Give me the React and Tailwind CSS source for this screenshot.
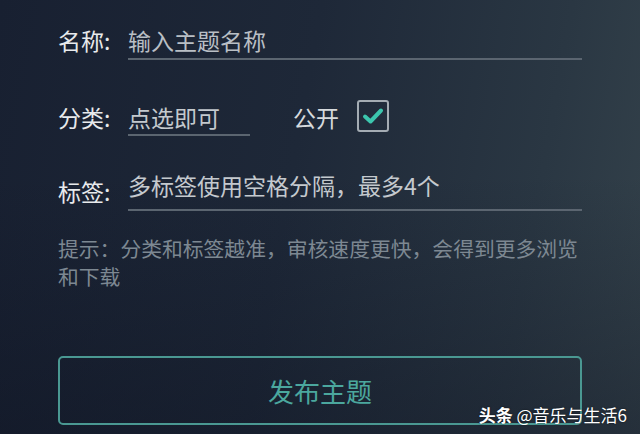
import React from 'react';

const cjk = "font-['Noto_Sans_CJK_SC','Noto_Sans',sans-serif]";

const CheckBox = () => (
    <div className="w-[32px] h-[32px] border-2 border-[#a4acb3] rounded-[3px] flex items-center justify-center">
        <svg width="22" height="18" viewBox="0 0 22 18" fill="none">
            <path d="M3 9.5 L8.5 14.5 L19 3.5" stroke="#3cc6ae" strokeWidth="4" strokeLinecap="round" strokeLinejoin="round" />
        </svg>
    </div>
);

const App = () => {
    return (
        <div className={`relative w-[640px] h-[434px] overflow-hidden ${cjk} bg-[linear-gradient(100deg,#182031_0%,#1e2838_45%,#2a3743_80%,#34424b_100%)]`}>
            {/* darker bottom */}
            <div className="absolute inset-0 bg-[linear-gradient(180deg,rgba(0,0,0,0)_40%,rgba(10,14,28,0.35)_100%)]" />

            <div className="relative flex flex-col pl-[58px] pr-[58px]">
                {/* 名称 */}
                <div className="flex items-start mt-[24px]">
                    <div className="w-[70px] text-[23px] leading-[32px] text-[#e8eaec]">名称:</div>
                    <div className="flex-1 border-b-2 border-[#5b6570] pb-[2px] text-[23px] leading-[32px] text-[#b9bfc5]">
                        输入主题名称
                    </div>
                </div>

                {/* 分类 */}
                <div className="flex items-start mt-[41px]">
                    <div className="w-[70px] text-[23px] leading-[32px] text-[#e8eaec]">分类:</div>
                    <div className="w-[122px] border-b-2 border-[#5b6570] pb-[1px] text-[23px] leading-[32px] text-[#c4c9ce]">
                        点选即可
                    </div>
                    <div className="ml-[43px] text-[23px] leading-[32px] text-[#d6dadd]">公开</div>
                    <div className="ml-[18px] -mt-[1px]">
                        <CheckBox />
                    </div>
                </div>

                {/* 标签 */}
                <div className="flex items-start mt-[33px]">
                    <div className="w-[70px] mt-[6px] text-[23px] leading-[32px] text-[#e8eaec]">标签:</div>
                    <div className="flex-1 border-b-2 border-[#5b6570] pb-[8px] text-[23px] leading-[32px] text-[#c4c9ce]">
                        多标签使用空格分隔，最多4个
                    </div>
                </div>

                {/* 提示 */}
                <p className="mt-[23px] text-[20.8px] leading-[28px] text-[#7d8892]">
                    提示：分类和标签越准，审核速度更快，会得到更多浏览和下载
                </p>

                {/* 发布 */}
                <button className="mt-[66px] h-[69px] w-full border-2 border-[#4a9892] rounded-[5px] text-[26px] text-[#4ba79e] flex items-center justify-center">
                    发布主题
                </button>
            </div>

            <div className="absolute right-[13px] bottom-[9px] text-[17px] leading-[20px] text-white [text-shadow:0_0_2px_rgba(0,0,0,0.6)]">
                <span className="font-bold">头条</span> @音乐与生活6
            </div>
        </div>
    );
};

export default App;
